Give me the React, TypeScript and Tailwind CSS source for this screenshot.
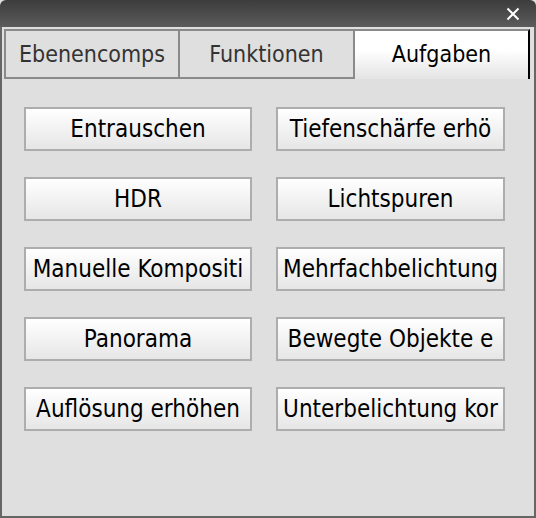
import React from "react";

const buttons: [string, string][] = [
  ["Entrauschen", "Tiefenschärfe erhö"],
  ["HDR", "Lichtspuren"],
  ["Manuelle Kompositi", "Mehrfachbelichtung"],
  ["Panorama", "Bewegte Objekte e"],
  ["Auflösung erhöhen", "Unterbelichtung kor"],
];

function Btn({ label }: { label: string }) {
  return (
    <div className="h-[44px] border-2 border-[#adadad] bg-gradient-to-b from-[#ffffff] to-[#e6e6e6] flex items-center justify-center overflow-hidden whitespace-nowrap text-black text-[24px]">
      {label}
    </div>
  );
}

export default function App() {
  return (
    <div
      className="w-[536px] h-[518px] flex flex-col bg-[#dfdfdf] text-[23px]"
      style={{ fontFamily: '"DejaVu Sans", sans-serif', fontStretch: "condensed" }}
    >
      <div className="h-[27px] shrink-0 rounded-t-[6px] bg-gradient-to-b from-[#3c3c3c] to-[#5c5c5c] flex items-center justify-end pr-[16px]">
        <svg width="14" height="14" viewBox="0 0 14 14">
          <path d="M1.5 1.5 L12.5 12.5 M12.5 1.5 L1.5 12.5" stroke="#ffffff" strokeWidth="2" />
        </svg>
      </div>
      <div className="flex-1 border-x-2 border-b-2 border-[#666666] flex flex-col">
        <div className="flex mt-[2px] ml-[2px] h-[50px] w-[526px]">
          <div className="w-[176px] border-2 border-[#8a8a8a] flex items-center justify-center text-[#333333]">
            Ebenencomps
          </div>
          <div className="w-[175px] border-y-2 border-r-2 border-[#8a8a8a] flex items-center justify-center text-[#333333]">
            Funktionen
          </div>
          <div className="flex-1 border-t-2 border-t-[#8a8a8a] border-r-2 border-r-black bg-gradient-to-b from-[#ffffff] from-40% to-[#e4e4e4] flex items-center justify-center text-black pb-[2px]">
            Aufgaben
          </div>
        </div>
        <div className="grid grid-cols-[228px_229px] gap-x-[24px] gap-y-[26px] ml-[22px] mt-[28px]">
          {buttons.map(([a, b]) => (
            <React.Fragment key={a}>
              <Btn label={a} />
              <Btn label={b} />
            </React.Fragment>
          ))}
        </div>
      </div>
    </div>
  );
}
